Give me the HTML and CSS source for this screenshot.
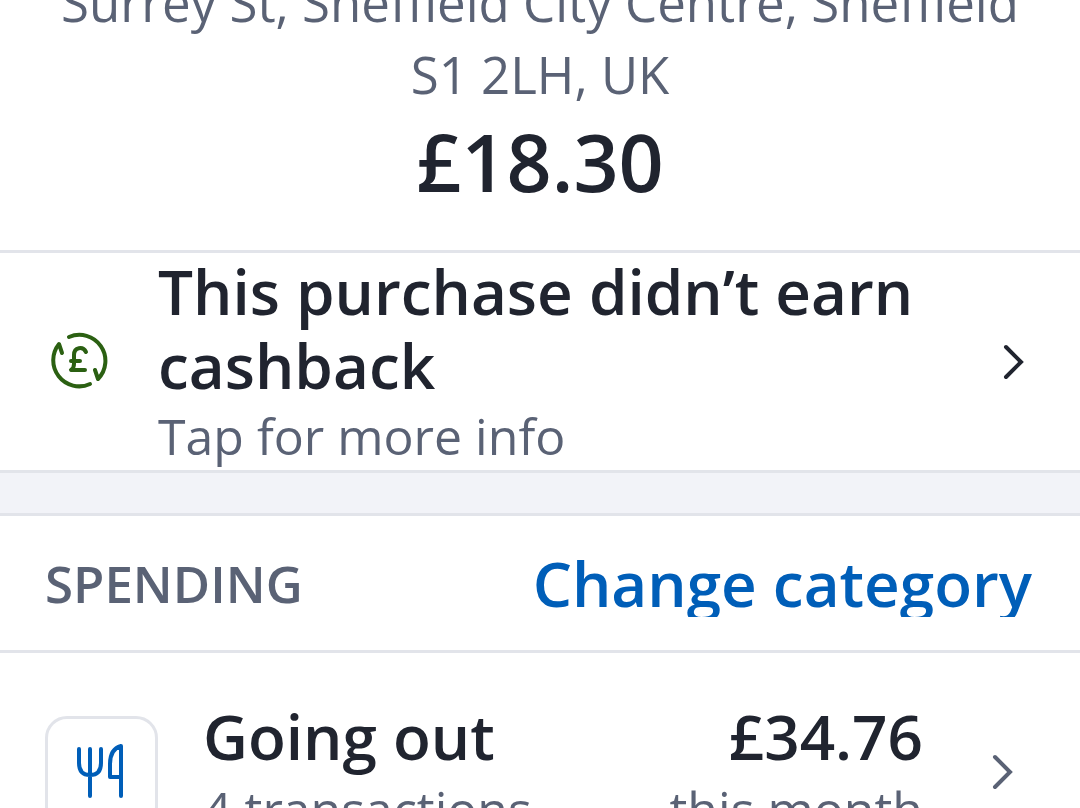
FILE: index.html
```html
<!DOCTYPE html>
<html lang="en">
<head>
    <meta charset="utf-8">
    <meta name="viewport" content="width=device-width, initial-scale=1">
    <title>Transaction details</title>
    <link rel="stylesheet" href="styles.css">
</head>
<body>

<header class="transaction">
    <p class="address">Surrey St, Sheffield City Centre, Sheffield<br>S1 2LH, UK</p>
    <h1 class="amount">£18.30</h1>
</header>

<a class="cashback" href="#cashback">
    <svg class="cashback-icon" viewBox="0 0 60 60" aria-hidden="true">
        <path d="M20 5 A26 26 0 0 1 49 47 L46 38"/>
        <path d="M41 52 A26 26 0 0 1 10 12 L13 21"/>
        <path d="M37 20 C34 14 25 15 25 23 V32 Q25 36 22 38 H36 M22 29 H31"/>
    </svg>
    <span class="cashback-text">
        <strong class="cashback-title">This purchase didn’t earn cashback</strong>
        <span class="cashback-info">Tap for more info</span>
    </span>
    <svg class="chevron" viewBox="0 0 24 40" aria-hidden="true"><path d="M4 5 L19 20 L4 35"/></svg>
</a>

<section class="spending">
    <div class="spending-header">
        <h2>SPENDING</h2>
        <button class="change-button" type="button">Change category</button>
    </div>
    <a class="category" href="#going-out">
        <span class="category-icon">
            <svg viewBox="0 0 50 58" aria-hidden="true">
                <path d="M2 6 V20 Q2 32 13 32 Q24 32 24 20 V6 M13 6 V53 M44 53 V3 Q33 6 33 21 V34 H44"/>
            </svg>
        </span>
        <span class="category-name">
            <strong>Going out</strong>
            <span>4 transactions</span>
        </span>
        <span class="category-total">
            <strong>£34.76</strong>
            <span>this month</span>
        </span>
        <svg class="chevron grey" viewBox="0 0 24 40" aria-hidden="true"><path d="M4 5 L19 20 L4 35"/></svg>
    </a>
</section>

</body>
</html>
```
FILE: styles.css
```css
* {
    box-sizing: border-box;
}
html {
    overflow: hidden;
}
body {
    margin: 0;
    background: #fff;
    color: #20242f;
    font-family: "Open Sans", "Noto Sans", sans-serif;
}
h1, h2, p {
    margin: 0;
}
a {
    color: inherit;
    text-decoration: none;
}
strong {
    font-weight: 600;
}
.transaction {
    margin-top: -34px;
    padding-bottom: 38px;
    border-bottom: 3px solid #e2e4ea;
    text-align: center;
}
.address {
    margin-bottom: 2px;
    color: #5a6275;
    font-size: 51px;
    line-height: 72px;
}
.amount {
    font-size: 79px;
    font-weight: 600;
    line-height: 100px;
}
.cashback {
    display: flex;
    align-items: center;
    padding: 0 54px 0 49px;
    border-bottom: 3px solid #e2e4ea;
}
.cashback-icon {
    flex: none;
    width: 60px;
    margin-right: 49px;
    fill: none;
    stroke: #2b6012;
    stroke-width: 4;
    stroke-linecap: round;
    stroke-linejoin: round;
}
.cashback-text {
    flex: 1;
    padding-top: 1px;
}
.cashback-title,
.cashback-info {
    display: block;
}
.cashback-title {
    font-size: 62px;
    line-height: 74px;
}
.cashback-info {
    color: #5a6275;
    font-size: 50px;
    line-height: 68px;
}
.chevron {
    flex: none;
    width: 24px;
    fill: none;
    stroke: #20242f;
    stroke-width: 4;
    stroke-linecap: round;
}
.chevron.grey {
    stroke: #5a6275;
}
.spending {
    border-top: 40px solid #f2f3f8;
}
.spending-header {
    display: flex;
    justify-content: space-between;
    align-items: center;
    height: 140px;
    padding: 0 48px 0 45px;
    border-top: 3px solid #e2e4ea;
    border-bottom: 3px solid #e2e4ea;
}
h2 {
    color: #5a6275;
    font-size: 51px;
    font-weight: 600;
}
.change-button {
    height: 68px;
    padding: 0;
    border: 0;
    background: none;
    color: #005eb8;
    font: 600 62px/68px "Open Sans", "Noto Sans", sans-serif;
    overflow: hidden;
}
.category {
    display: flex;
    align-items: center;
    padding: 48px 65px 20px 45px;
}
.category-icon {
    display: flex;
    justify-content: center;
    align-items: center;
    width: 113px;
    height: 113px;
    margin-right: 45px;
    border: 3px solid #e2e4ea;
    border-radius: 22px;
}
.category-icon svg {
    width: 50px;
    fill: none;
    stroke: #005eb8;
    stroke-width: 4;
    stroke-linecap: round;
    stroke-linejoin: round;
}
.category-name {
    flex: 1;
}
.category-total {
    margin-right: 68px;
    text-align: right;
}
.category strong,
.category span span {
    display: block;
}
.category strong {
    margin-bottom: 4px;
    font-size: 62px;
    line-height: 70px;
}
.category span span {
    color: #5a6275;
    font-size: 50px;
    line-height: 68px;
}
```
